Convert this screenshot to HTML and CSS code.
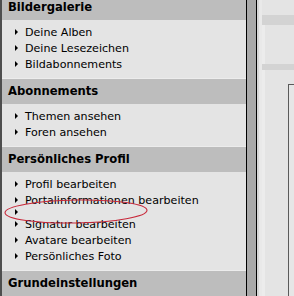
FILE: index.html
```html
<!DOCTYPE html>
<html lang="de">
<head>
    <meta charset="UTF-8">
    <title>Profil</title>
    <link rel="stylesheet" href="styles.css">
</head>
<body>

    <div class="layout">
        <!-- Linke Navigation -->
        <div class="sidebar">
            <div class="menu-head">Bildergalerie</div>
            <ul class="menu-list">
                <li>Deine Alben</li>
                <li>Deine Lesezeichen</li>
                <li>Bildabonnements</li>
            </ul>

            <div class="menu-head">Abonnements</div>
            <ul class="menu-list">
                <li>Themen ansehen</li>
                <li>Foren ansehen</li>
            </ul>

            <div class="menu-head">Persönliches Profil</div>
            <ul class="menu-list">
                <li>Profil bearbeiten</li>
                <li>Portalinformationen bearbeiten</li>
                <li class="empty"></li>
                <li>Signatur bearbeiten</li>
                <li>Avatare bearbeiten</li>
                <li>Persönliches Foto</li>
            </ul>

            <div class="menu-head">Grundeinstellungen</div>
        </div>

        <!-- Trennleiste -->
        <div class="splitter"></div>

        <!-- Inhalt rechts -->
        <div class="main">
            <div class="main-edge"></div>
            <div class="main-body">
                <div class="gap-top"></div>
                <div class="bar"></div>
                <div class="panel panel-small"></div>
                <div class="bar bar-thin"></div>
                <div class="panel panel-tall">
                    <div class="inner-box"></div>
                </div>
            </div>
        </div>
    </div>

    <!-- Markierung -->
    <svg class="mark" width="294" height="296" viewBox="0 0 294 296">
        <ellipse cx="76" cy="211.5" rx="71" ry="11.5" transform="rotate(-1 76 211.5)" fill="none" stroke="#c8283a" stroke-width="1.1"/>
    </svg>

</body>
</html>
```

FILE: styles.css
```css
body {
    margin: 0;
    padding: 0;
    width: 294px;
    height: 296px;
    overflow: hidden;
    background-color: #e4e4e4;
    font-family: "DejaVu Sans", Verdana, sans-serif;
    color: #000;
    position: relative;
}

.layout {
    display: flex;
    height: 296px;
    overflow: hidden;
}

/* Linke Navigation */
.sidebar {
    width: 244px;
    flex-shrink: 0;
    border-left: 2px solid #4e4e4e;
    background-color: #e4e4e4;
    margin-top: -5px;
}

.menu-head {
    height: 25px;
    line-height: 25px;
    padding-left: 6px;
    background-color: #bdbdbd;
    font-size: 11.6px;
    font-weight: bold;
}

.menu-list {
    list-style: none;
    margin: 0;
    padding: 4px 0 6px 0;
    border-bottom: 1px solid #ececec;
}

.menu-list li {
    display: flex;
    align-items: center;
    height: 16px;
    padding-left: 13px;
    font-size: 11.1px;
    white-space: nowrap;
}

.menu-list li::before {
    content: '';
    width: 0;
    height: 0;
    border-left: 3px solid #000;
    border-top: 3px solid transparent;
    border-bottom: 3px solid transparent;
    margin-right: 7px;
}

.menu-list li.empty {
    height: 8px;
}

/* Trennleiste */
.splitter {
    width: 9px;
    flex-shrink: 0;
    background-color: #a9a9a9;
    border-left: 1px solid #000;
    border-right: 1px solid #000;
}

/* Inhalt rechts */
.main {
    flex: 1;
    display: flex;
}

.main-edge {
    width: 2px;
    background-color: #d6d6d6;
    border-right: 3px solid #e9e9e9;
}

.main-body {
    flex: 1;
    display: flex;
    flex-direction: column;
}

.gap-top {
    height: 15px;
    background-color: #e4e4e4;
}

.bar {
    height: 10px;
    background-color: #d3d3d3;
}

.bar-thin {
    height: 6px;
}

.panel {
    background-color: #e4e4e4;
    border-left: 3px solid #ececec;
}

.panel-small {
    height: 39px;
}

.panel-tall {
    flex: 1;
    display: flex;
    flex-direction: column;
    padding: 14px 0 0 23px;
}

.inner-box {
    flex: 1;
    border-left: 1px solid #5a5a5a;
    border-top: 1px solid #5a5a5a;
    background-color: #e6e6e6;
}

/* Markierung */
.mark {
    position: absolute;
    left: 0;
    top: 0;
    pointer-events: none;
}
```
